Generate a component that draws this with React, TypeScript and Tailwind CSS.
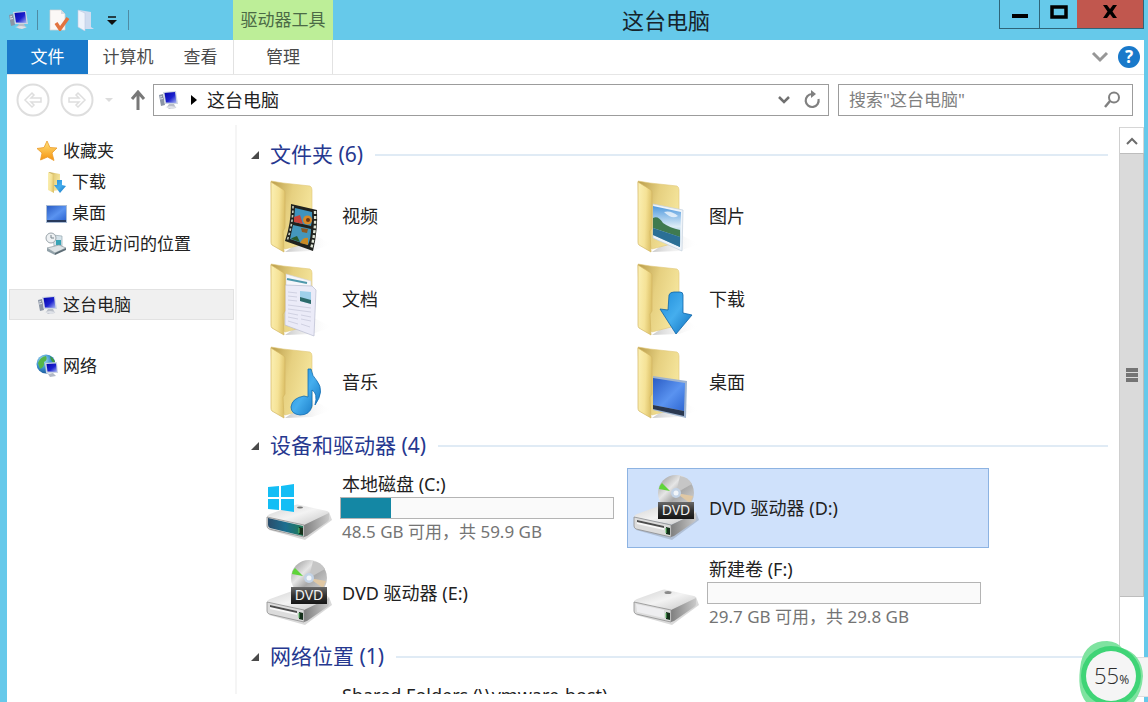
import React from 'react';

type FolderKind = 'video' | 'picture' | 'document' | 'download' | 'music' | 'desktop';
type DriveKind = 'system' | 'dvd' | 'plain';

interface Drive {
    name: string;
    kind: DriveKind;
    used?: number;
    info?: string;
    selected?: boolean;
}

const folders: { name: string; kind: FolderKind }[] = [
    { name: '视频', kind: 'video' },
    { name: '图片', kind: 'picture' },
    { name: '文档', kind: 'document' },
    { name: '下载', kind: 'download' },
    { name: '音乐', kind: 'music' },
    { name: '桌面', kind: 'desktop' },
];

const drives: Drive[] = [
    { name: '本地磁盘 (C:)', kind: 'system', used: 18.5, info: '48.5 GB 可用，共 59.9 GB' },
    { name: 'DVD 驱动器 (D:)', kind: 'dvd', selected: true },
    { name: 'DVD 驱动器 (E:)', kind: 'dvd' },
    { name: '新建卷 (F:)', kind: 'plain', used: 0, info: '29.7 GB 可用，共 29.8 GB' },
];

/* Gradients shared by all the icons */
const IconDefs = () => (
    <svg className="absolute" width="0" height="0" aria-hidden="true">
        <defs>
            <linearGradient id="flap" x1="0" y1="0" x2="1" y2="0.2">
                <stop offset="0" stopColor="#fbf0b4" />
                <stop offset="0.6" stopColor="#f5e296" />
                <stop offset="1" stopColor="#dfc46c" />
            </linearGradient>
            <linearGradient id="back" x1="0" y1="0" x2="1" y2="0.4">
                <stop offset="0" stopColor="#b99c4a" />
                <stop offset="0.5" stopColor="#e6d080" />
                <stop offset="1" stopColor="#f5e59c" />
            </linearGradient>
            <linearGradient id="shade" x1="0" y1="0" x2="1" y2="0">
                <stop offset="0" stopColor="#a5a5a5" />
                <stop offset="1" stopColor="#ffffff" stopOpacity="0" />
            </linearGradient>
            <linearGradient id="blue" x1="0" y1="0" x2="1" y2="1">
                <stop offset="0" stopColor="#1e8cd8" />
                <stop offset="0.5" stopColor="#45aeee" />
                <stop offset="1" stopColor="#0d6dbb" />
            </linearGradient>
            <linearGradient id="screen" x1="0" y1="0" x2="1" y2="1">
                <stop offset="0" stopColor="#2a5cc4" />
                <stop offset="0.55" stopColor="#5a93f0" />
                <stop offset="1" stopColor="#2e66d2" />
            </linearGradient>
            <linearGradient id="monitor" x1="0" y1="0" x2="1" y2="1">
                <stop offset="0" stopColor="#0404a8" />
                <stop offset="0.55" stopColor="#1c22d0" />
                <stop offset="1" stopColor="#aab8f2" />
            </linearGradient>
            <linearGradient id="sky" x1="0" y1="0" x2="0" y2="1">
                <stop offset="0" stopColor="#4e98dd" />
                <stop offset="0.5" stopColor="#dcecf7" />
                <stop offset="1" stopColor="#4089b0" />
            </linearGradient>
            <linearGradient id="lid" x1="0" y1="0" x2="1" y2="1">
                <stop offset="0" stopColor="#d2d2d2" />
                <stop offset="0.5" stopColor="#f3f3f3" />
                <stop offset="1" stopColor="#c6c6c6" />
            </linearGradient>
            <linearGradient id="side" x1="0" y1="0" x2="1" y2="0">
                <stop offset="0" stopColor="#7f7f7f" />
                <stop offset="1" stopColor="#c9c9c9" />
            </linearGradient>
            <linearGradient id="teal" x1="0" y1="0" x2="1" y2="0">
                <stop offset="0" stopColor="#2a4d6b" />
                <stop offset="0.5" stopColor="#1c6e90" />
                <stop offset="1" stopColor="#1f7a55" />
            </linearGradient>
            <linearGradient id="disc" x1="0" y1="0" x2="1" y2="1">
                <stop offset="0" stopColor="#8e8e8e" />
                <stop offset="0.35" stopColor="#e6e6e6" />
                <stop offset="0.55" stopColor="#a9a9a9" />
                <stop offset="1" stopColor="#dedede" />
            </linearGradient>
            <linearGradient id="plate" x1="0" y1="0" x2="0" y2="1">
                <stop offset="0" stopColor="#6a6a6a" />
                <stop offset="0.5" stopColor="#333333" />
                <stop offset="1" stopColor="#161616" />
            </linearGradient>
            <linearGradient id="star" x1="0" y1="0" x2="0" y2="1">
                <stop offset="0" stopColor="#ffe27a" />
                <stop offset="1" stopColor="#f6930f" />
            </linearGradient>
            <radialGradient id="globe" cx="0.35" cy="0.3" r="0.8">
                <stop offset="0" stopColor="#b8e6f6" />
                <stop offset="0.5" stopColor="#3a92cf" />
                <stop offset="1" stopColor="#13498c" />
            </radialGradient>
        </defs>
    </svg>
);

const FolderContent = ({ kind }: { kind: FolderKind }) => {
    switch (kind) {
        case 'video':
            return (
                <g>
                    <path d="M31 28 L57 34 Q58 54 53 75 L25 65 Q31 48 31 28Z" fill="#20221e" />
                    <path d="M35 32 L52 36 Q53 43 51 50 L34 46Z" fill="#3f93bd" />
                    <path d="M33 49 L51 53 Q51 62 48 69 L30 63Z" fill="#4497bd" />
                    <path d="M34 41 L40 39 L43 48 L34 46Z" fill="#c9423a" />
                    <circle cx="47.500" cy="44" r="4.500" fill="#d98826" />
                    <circle cx="48" cy="44" r="2" fill="#6b3713" />
                    <path d="M41 52 l7 1 l-1 4 l-5 -1z" fill="#8c5a24" />
                    <path d="M40 67 q3 -6 8 -5 l0 7z" fill="#c98a25" />
                    <path d="M32 62 l5 -2 l3 6 l-9 -3z" fill="#2b5c2d" />
                    <path d="M33 30 Q33 48 27 65" fill="none" stroke="#c8cfc0" strokeWidth="1.600" strokeDasharray="2.500 2" />
                    <path d="M55 35 Q56 55 51 73" fill="none" stroke="#e0e6d8" strokeWidth="2.400" strokeDasharray="3 1.800" />
                </g>
            );
        case 'picture':
            return (
                <g>
                    <path d="M26 28 L56 34 L55 75 L26 62Z" fill="#eef4fa" stroke="#c3d0dc" strokeWidth="0.700" />
                    <path d="M26 30 L54 36 L53 71 L26 59Z" fill="url(#sky)" />
                    <path d="M26 42 Q31 39 36 47 Q43 52 53 54 L53 61 L26 52Z" fill="#3f7a4f" />
                    <path d="M26 52 L53 61 L53 71 L26 59Z" fill="#2b6f95" />
                    <path d="M37 36 q7 -2 14 4 q-6 4 -14 -4z" fill="#ffffff" opacity="0.7" />
                </g>
            );
        case 'document':
            return (
                <g>
                    <path d="M26 15 L51 22 L51 60 L26 56Z" fill="#f6f6fb" stroke="#cfd1dc" strokeWidth="0.600" />
                    <path d="M27 20 L47 24" stroke="#4e98ac" strokeWidth="2" />
                    <path d="M25 26 L52 27 L56 31 L54 77 L25 66Z" fill="#ebebf8" stroke="#b9bbd0" strokeWidth="0.700" />
                    <path d="M40 32 L51 33 L51 45 L40 42Z" fill="#9fd0ea" />
                    <path d="M40 38 L51 41 L51 45 L40 42Z" fill="#2c6a6a" />
                    <path d="M28 33 l9 1 M28 37 l9 1 M28 41 l9 1 M28 46 l23 3 M28 50 l23 3 M28 54 l10 2 M41 56 l10 2 M28 58 l10 2 M41 60 l10 2 M28 62 l10 3 M41 65 l9 3" stroke="#d0d1e2" strokeWidth="1" />
                </g>
            );
        case 'download':
            return (
                <path
                    d="M42 36 Q43 33 47 33 L53 33 Q56 33 56 36 L56 54 L65 56 L49 75 L33 50 L41 51Z"
                    fill="url(#blue)"
                    stroke="#0c64a8"
                    strokeWidth="0.800"
                />
            );
        case 'music':
            return (
                <path
                    d="M48 27 L51 27 Q52 34 57 39 Q65 49 55 63 Q58 51 52 48 L52 64 Q50 73 40 73 Q31 72 31 65 Q32 56 44 54 L48 55Z"
                    fill="url(#blue)"
                    stroke="#0f6cb2"
                    strokeWidth="0.800"
                />
            );
        case 'desktop':
            return (
                <g>
                    <path d="M26 34 L60 39 L59 76 L26 68Z" fill="#9fb4cf" />
                    <path d="M26 36 L58 41 L57 69 L26 63Z" fill="url(#screen)" />
                    <path d="M26 63 L57 69 L57 74 L26 67Z" fill="#2a3850" />
                </g>
            );
    }
};

const FolderIcon = ({ kind }: { kind: FolderKind }) => (
    <svg className="h-[80px] w-[72px] shrink-0" viewBox="0 0 72 80" aria-hidden="true">
        <path d="M25 76 L52 58 L72 68 L52 75Z" fill="url(#shade)" opacity="0.6" />
        <path d="M11 5 L23 7 L50 10 Q52 11 52 14 L52 66 L25 73 L13 60Z" fill="url(#back)" stroke="#e0c878" strokeWidth="0.600" />
        <FolderContent kind={kind} />
        <path d="M11 6 L24 14 Q25 15 25 17 L25 52 L23 55 L24 76 L12 69 Q11 68 11 66Z" fill="url(#flap)" stroke="#d3b661" strokeWidth="0.700" />
    </svg>
);

const DriveIcon = ({ kind }: { kind: DriveKind }) => (
    <svg className="h-[80px] w-[72px] shrink-0" viewBox="0 0 72 80" aria-hidden="true">
        <path d="M8 62 L44 72 L71 52 L68 44Z" fill="#000000" opacity="0.15" />
        <path d="M6 49 Q6 47 9 46 L34 37 Q36 36 39 37 L66 43 Q69 44 67 46 L45 56 Q43 57 41 56Z" fill="url(#lid)" />
        <path d="M43 57 L68 45 L68 51 Q68 53 66 54 L46 68 L43 69Z" fill="url(#side)" />
        <path d="M6 49 L43 57 L43 69 L8 61 Q6 60 6 58Z" fill="#dcdcdc" stroke="#8d8d8d" strokeWidth="0.800" />
        {kind === 'system' && (
            <>
                <path d="M7 50 L42 58 L42 68 L9 60 Q7 59 7 57Z" fill="url(#teal)" />
                <path d="M7 19 L18 18 L18 29 L7 29Z M20 18 L33 16 L33 29 L20 29Z M7 31 L18 31 L18 42 L7 41Z M20 31 L33 31 L33 44 L20 42Z" fill="#14bef5" />
                <ellipse cx="39" cy="39.500" rx="3" ry="1" fill="#777777" />
            </>
        )}
        {kind === 'plain' && (
            <>
                <path d="M8 51 L36 57 L36 65 L9 59Z" fill="#f2f2f5" opacity="0.8" />
                <ellipse cx="40" cy="39.500" rx="3.500" ry="1.500" fill="#8a8a8a" />
            </>
        )}
        {kind === 'dvd' && (
            <>
                <path d="M9 52 L36 58 L36 62 L9 56Z" fill="#f8f8f8" />
                <path d="M9 52 L36 58 L36 60 L9 54Z" fill="#4d4d4d" />
                <circle cx="48" cy="25" r="18" fill="url(#disc)" />
                <path d="M42 23 L31 21 Q31 18 34 15Z" fill="#5fd43a" />
                <path d="M48 25 L52 8 Q60 9 64 16Z" fill="#c6c6c6" />
                <path d="M48 25 L65 28 L62 35Z" fill="#e0c8a4" />
                <circle cx="48" cy="25" r="5" fill="#c3d3e6" />
                <circle cx="48" cy="25" r="2.500" fill="#f2f6fa" />
                <rect x="30" y="34" width="36" height="17" fill="url(#plate)" />
                <text x="48" y="47" textAnchor="middle" fontSize="14" fill="#f2f2f2">DVD</text>
            </>
        )}
        <path d="M38 59 L42 60 L42 67 L38 66Z" fill="#15301b" />
        <path d="M38 60 L38 65" stroke="#63c46b" strokeWidth="1" />
    </svg>
);

const ComputerIcon = () => (
    <svg className="size-6 shrink-0" viewBox="0 0 24 24" aria-hidden="true">
        <path d="M2 7 L6 6 L8 17 L4 18Z" fill="#8b95a5" />
        <path d="M3 9 l2 -0.500 M3 11 l3 -0.500" stroke="#d9dfe8" strokeWidth="1" />
        <path d="M6 4 L19 3 L21 16 L8 16Z" fill="#cdd5e2" />
        <path d="M7.500 5 L18 4 L19.500 15 L9 14.500Z" fill="url(#monitor)" />
        <path d="M12 16 L17 16 L19 20 L12 21 L10 19Z" fill="#b9bec8" />
        <path d="M8 19 L15 21 L20 19 L14 18Z" fill="#dfe2e8" />
    </svg>
);

const NetworkIcon = () => (
    <svg className="size-6 shrink-0" viewBox="0 0 24 24" aria-hidden="true">
        <circle cx="10" cy="10" r="9.500" fill="url(#globe)" />
        <path d="M2 9 Q4 3 10 2 Q12 6 8 8 Q9 13 4 15Z" fill="#55b548" />
        <path d="M14 2 Q19 5 19 10 Q15 8 14 2Z" fill="#3f9c3c" />
        <path d="M9 9 L21 8 L22 19 L10 19Z" fill="#cbd4e3" />
        <path d="M10.500 10 L20 9.500 L21 18 L11.500 17.500Z" fill="url(#monitor)" />
        <path d="M12 20 L17 19 L20 22 L14 23Z" fill="#b3bac6" />
    </svg>
);

const StarIcon = () => (
    <svg className="size-6 shrink-0" viewBox="0 0 24 24" aria-hidden="true">
        <path d="M11 2 L14 8.500 L21 9 L16 14 L18 21.500 L11.500 18 L4.500 21 L6 14 L1 9.500 L8 8.500Z" fill="url(#star)" stroke="#ea9b2b" strokeWidth="0.800" strokeLinejoin="round" />
    </svg>
);

const DownloadsIcon = () => (
    <svg className="size-6 shrink-0" viewBox="0 0 24 24" aria-hidden="true">
        <path d="M4 2 L15 4 L15 20 L7 21Z" fill="url(#back)" />
        <path d="M12 10 L17 10 L17 15 L21 16 L15 23 L9 15 L12 15Z" fill="url(#blue)" />
        <path d="M3 2 L9 5 L9 23 L3 20Z" fill="url(#flap)" />
    </svg>
);

const DesktopIcon = () => (
    <svg className="size-6 shrink-0" viewBox="0 0 24 24" aria-hidden="true">
        <rect x="1" y="4" width="21" height="18" fill="#a9bcd6" />
        <rect x="2" y="5" width="19" height="14" fill="url(#screen)" />
        <rect x="2" y="19" width="19" height="2" fill="#283a5c" />
    </svg>
);

const RecentIcon = () => (
    <svg className="size-6 shrink-0" viewBox="0 0 24 24" aria-hidden="true">
        <path d="M8 3 L17 4 L17 14 L9 14Z" fill="#d5e3ea" stroke="#97a7b0" strokeWidth="0.700" />
        <path d="M11 8 L16 8 L16 13 L11 13Z" fill="#36a3b5" />
        <circle cx="6" cy="6" r="5" fill="#eef1f3" stroke="#9ba5ab" strokeWidth="1" />
        <path d="M6 3 V6 H9" fill="none" stroke="#77838a" strokeWidth="1" />
        <path d="M2 16 L14 13 L21 16 L10 21Z" fill="#dde3e6" stroke="#8d999f" strokeWidth="0.700" />
        <path d="M2 16 L10 21 L10 23 L2 19Z" fill="#90a0a8" />
        <path d="M10 21 L21 16 L21 18 L10 23Z" fill="#5c6c75" />
    </svg>
);

interface NavItemProps {
    icon: React.ReactNode;
    label: string;
    child?: boolean;
    selected?: boolean;
}

const NavItem: React.FC<NavItemProps> = ({ icon, label, child, selected }) => (
    <a
        href="#"
        className={`flex h-[31px] items-center gap-[3px] border ${child ? 'pl-[35px]' : 'pl-[26px]'} ${
            selected ? 'border-[#e2e2e2] bg-[#f0f0f0]' : 'border-transparent'
        }`}
    >
        {icon}
        <span>{label}</span>
    </a>
);

const GroupHeader = ({ title, count }: { title: string; count: number }) => (
    <h2 className="flex h-8 items-center text-[21px] text-[#26388f]">
        <svg className="mr-[10px] ml-[13px] size-[10px]" viewBox="0 0 10 10" aria-hidden="true">
            <path d="M9 1 L9 9 L1 9Z" fill="#4a4a4a" />
        </svg>
        <span>
            {title} ({count})
        </span>
        <span className="ml-3 h-[2px] flex-1 bg-[#e0ebf5]" />
    </h2>
);

const DriveTile = ({ drive }: { drive: Drive }) => (
    <a
        href="#"
        className={`flex h-[80px] items-center border ${
            drive.selected ? 'border-[#8db3e2] bg-[#cfe1fb]' : 'border-transparent'
        }`}
    >
        <DriveIcon kind={drive.kind} />
        {drive.info ? (
            <div className="ml-[7px] flex-1 pr-[7px]">
                <div className="pl-[2px] text-lg leading-[26px]">{drive.name}</div>
                <div
                    role="meter"
                    aria-label={drive.name}
                    aria-valuenow={drive.used}
                    className="h-[22px] border border-[#b4b4b4] bg-[#fafafa]"
                >
                    <div className="h-full bg-[#1487a4]" style={{ width: `${drive.used}%` }} />
                </div>
                <div className="pl-[2px] leading-[26px] text-[#747474]">{drive.info}</div>
            </div>
        ) : (
            <span className="ml-[9px] text-lg">{drive.name}</span>
        )}
    </a>
);

const TitleBar = () => (
    <header className="flex h-10 shrink-0">
        <div className="flex w-[226px] shrink-0 items-center">
            <ComputerIcon />
            <span className="ml-[6px] h-5 w-px bg-[#4f8ba3]" />
            <button className="ml-[10px]" aria-label="属性">
                <svg className="size-[22px]" viewBox="0 0 22 22">
                    <path d="M2 1 L13 1 L17 5 L17 21 L2 21Z" fill="#fbf8f6" stroke="#d9d3d0" strokeWidth="0.700" />
                    <path d="M13 1 L13 5 L17 5Z" fill="#d6dbe2" />
                    <path d="M8 14 L12 20 L20 9" fill="none" stroke="#e27440" strokeWidth="3.500" />
                </svg>
            </button>
            <button className="ml-[6px]" aria-label="新建文件夹">
                <svg className="size-[22px]" viewBox="0 0 22 22">
                    <path d="M3 1 L15 3 L15 18 L18 20 L9 20Z" fill="#cfdcf0" />
                    <path d="M2 1 L9 4 L9 22 L2 18Z" fill="#eef3fb" stroke="#bdcbe2" strokeWidth="0.600" />
                </svg>
            </button>
            <button className="ml-2" aria-label="自定义快速访问工具栏">
                <svg className="size-3" viewBox="0 0 12 12">
                    <path d="M2 3 H10" stroke="#111111" strokeWidth="1.500" />
                    <path d="M1 6 H11 L6 11Z" fill="#111111" />
                </svg>
            </button>
            <span className="ml-[10px] h-5 w-px bg-[#4f8ba3]" />
        </div>
        <div className="flex w-[100px] shrink-0 items-center justify-center bg-[#bdee98] text-[#4b6a46]">驱动器工具</div>
        <h1 className="flex-1 self-center text-center text-[22px] leading-8 text-[#16242b]">这台电脑</h1>
        <div className="flex h-[29px] border-b border-l border-[#2f6478]">
            <button className="flex w-10 items-center justify-center border-r border-[#2f6478]" aria-label="最小化">
                <svg className="size-5" viewBox="0 0 20 20"><path d="M2 10 H18 V14 H2Z" fill="#000000" /></svg>
            </button>
            <button className="flex w-[37px] items-center justify-center" aria-label="最大化">
                <svg className="size-5" viewBox="0 0 20 20"><path d="M3 3 H17 V13 H3Z" fill="none" stroke="#000000" strokeWidth="3.500" /></svg>
            </button>
            <button className="flex w-[67px] items-center justify-center border-r border-[#2f6478] bg-[#c1574e]" aria-label="关闭">
                <svg className="size-5" viewBox="0 0 20 20">
                    <path d="M3 1 H7 L10 5 L13 1 H17 L12.500 7.500 L17 14 H13 L10 10 L7 14 H3 L7.500 7.500Z" fill="#000000" />
                </svg>
            </button>
        </div>
    </header>
);

const Ribbon = () => (
    <nav className="flex h-[35px] shrink-0 border-b border-[#e6e6e6] text-[#4a4a4a]">
        <button className="w-[81px] bg-[#1979ca] text-white">文件</button>
        <button className="w-[80px]">计算机</button>
        <button className="w-[65px]">查看</button>
        <button className="w-[100px] border-x border-[#e2e2e2]">管理</button>
        <div className="ml-auto flex items-center gap-[8px] pr-1">
            <button aria-label="展开功能区">
                <svg className="size-5" viewBox="0 0 20 20"><path d="M3 6 L10 13 L17 6" fill="none" stroke="#979797" strokeWidth="3" /></svg>
            </button>
            <button className="flex size-[22px] items-center justify-center rounded-full bg-[#1979ca] font-bold text-white" aria-label="帮助">
                ?
            </button>
        </div>
    </nav>
);

const AddressRow = () => (
    <div className="flex h-[50px] shrink-0 items-center pr-[11px] pl-[9px]">
        <button aria-label="后退">
            <svg className="size-[34px]" viewBox="0 0 34 34" fill="none" stroke="#dedede">
                <circle cx="17" cy="17" r="15.500" strokeWidth="2" />
                <path d="M9 17 L16 10 L18 12 L15 15 H25 V19 H15 L18 22 L16 24Z" strokeWidth="1.500" />
            </svg>
        </button>
        <button className="ml-[10px]" aria-label="前进">
            <svg className="size-[34px]" viewBox="0 0 34 34" fill="none" stroke="#dedede">
                <circle cx="17" cy="17" r="15.500" strokeWidth="2" />
                <path d="M25 17 L18 10 L16 12 L19 15 H9 V19 H19 L16 22 L18 24Z" strokeWidth="1.500" />
            </svg>
        </button>
        <button className="ml-[10px]" aria-label="最近浏览的位置">
            <svg className="size-[10px]" viewBox="0 0 10 10"><path d="M1 3 H9 L5 7Z" fill="#dcdcdc" /></svg>
        </button>
        <button className="ml-[14px]" aria-label="上移">
            <svg className="size-5" viewBox="0 0 20 20" fill="none" stroke="#787878" strokeWidth="3">
                <path d="M10 20 V3 M4 9 L10 2 L16 9" />
            </svg>
        </button>
        <div className="ml-[5px] flex h-8 flex-1 items-center border border-[#9c9c9c] pl-[3px]">
            <ComputerIcon />
            <svg className="ml-2 size-3" viewBox="0 0 12 12"><path d="M2 1 L8 6 L2 11Z" fill="#000000" /></svg>
            <button className="ml-[6px] text-lg">这台电脑</button>
            <button className="ml-auto" aria-label="历史记录">
                <svg className="size-4" viewBox="0 0 16 16"><path d="M3 5 L8 10 L13 5" fill="none" stroke="#707070" strokeWidth="2.500" /></svg>
            </button>
            <button className="mr-[6px] ml-[10px]" aria-label="刷新">
                <svg className="size-5" viewBox="0 0 20 20">
                    <path d="M16.500 9 A6.500 6.500 0 1 1 10 4" fill="none" stroke="#808080" strokeWidth="2.200" />
                    <path d="M9 0 L14 4 L9 8Z" fill="#808080" />
                </svg>
            </button>
        </div>
        <label className="ml-[9px] flex h-8 w-[295px] items-center border border-[#9c9c9c] px-[10px]">
            <input className="min-w-0 flex-1 outline-none placeholder:text-[#808080]" type="text" aria-label="搜索" placeholder={'搜索"这台电脑"'} />
            <svg className="size-5" viewBox="0 0 20 20" fill="none" stroke="#808080">
                <circle cx="12" cy="7.500" r="5" strokeWidth="2" />
                <path d="M8 11 L3 17" strokeWidth="2.500" />
            </svg>
        </label>
    </div>
);

const Scrollbar = () => (
    <div className="mt-[2px] flex w-[25px] shrink-0 flex-col border-l border-[#cfcfcf]">
        <button className="flex h-[26px] shrink-0 items-center justify-center border-t border-r border-[#d6d6d6]" aria-label="向上滚动">
            <svg className="size-4" viewBox="0 0 16 16"><path d="M3 11 L8 6 L13 11" fill="none" stroke="#6c6c6c" strokeWidth="2" /></svg>
        </button>
        <div className="flex-1">
            <div className="flex h-[82%] flex-col items-center justify-center gap-px border border-l-0 border-[#bdbdbd] bg-[#dadada]">
                <span className="h-1 w-3 bg-[#747474]" />
                <span className="h-1 w-3 bg-[#747474]" />
                <span className="h-1 w-3 bg-[#747474]" />
            </div>
        </div>
    </div>
);

const UsageBall = () => (
    <div className="absolute right-0 bottom-0 h-[62px] w-[72px]">
        <div className="absolute top-[17px] right-0 h-10 w-9 border-y border-[#dedede] bg-[#f4f4f4]" />
        <svg className="absolute inset-0 h-full w-full" viewBox="0 0 72 62" aria-hidden="true">
            <path d="M5 22 Q10 1 31 1 Q42 2 46 8 Q66 14 67 36 Q66 52 58 62 L10 62 Q0 50 5 22Z" fill="#7fe3a0" />
            <circle cx="35" cy="36" r="30" fill="#3fd476" />
            <circle cx="35" cy="36" r="25" fill="#f5f5f5" />
        </svg>
        <span className="absolute top-[21px] left-[18px] font-['Open_Sans'] text-[22px] leading-7 font-light text-[#2c2c2c]">
            55<span className="text-[12px] font-normal">%</span>
        </span>
    </div>
);

const App: React.FC = () => {
    return (
        <div className="relative flex h-screen flex-col overflow-hidden bg-[#66c9ea] pr-1 pl-[7px] font-['Noto_Sans','Noto_Sans_CJK_SC',sans-serif] text-[17px] text-[#222222]">
            <IconDefs />
            <TitleBar />
            <div className="flex min-h-0 flex-1 flex-col bg-white pb-2">
                <Ribbon />
                <AddressRow />
                <div className="flex min-h-0 flex-1">
                    {/* Navigation pane */}
                    <aside className="w-[230px] shrink-0 border-r-2 border-[#f5f5f5] pt-[10px] pr-[1px] pl-[2px]">
                        <NavItem icon={<StarIcon />} label="收藏夹" />
                        <NavItem icon={<DownloadsIcon />} label="下载" child />
                        <NavItem icon={<DesktopIcon />} label="桌面" child />
                        <NavItem icon={<RecentIcon />} label="最近访问的位置" child />
                        <div className="mt-[30px]">
                            <NavItem icon={<ComputerIcon />} label="这台电脑" selected />
                        </div>
                        <div className="mt-[30px]">
                            <NavItem icon={<NetworkIcon />} label="网络" />
                        </div>
                    </aside>

                    {/* File list */}
                    <main className="min-w-0 flex-1 overflow-hidden pt-[14px] pr-[11px]">
                        <section>
                            <GroupHeader title="文件夹" count={6} />
                            <div className="mt-[5px] grid grid-cols-[repeat(auto-fill,362px)] gap-x-[5px] gap-y-[3px] pl-[23px]">
                                {folders.map((f) => (
                                    <a key={f.kind} href="#" className="flex h-[80px] items-center">
                                        <FolderIcon kind={f.kind} />
                                        <span className="ml-[10px] text-lg">{f.name}</span>
                                    </a>
                                ))}
                            </div>
                        </section>
                        <section className="mt-2">
                            <GroupHeader title="设备和驱动器" count={4} />
                            <div className="mt-[6px] grid grid-cols-[repeat(auto-fill,362px)] gap-[5px] pl-[23px]">
                                {drives.map((d) => (
                                    <DriveTile key={d.name} drive={d} />
                                ))}
                            </div>
                        </section>
                        <section className="mt-2">
                            <GroupHeader title="网络位置" count={1} />
                            <a href="#" className="mt-[5px] block pl-[105px] text-lg leading-[34px]">
                                Shared Folders (\\vmware-host)
                            </a>
                        </section>
                    </main>
                    <Scrollbar />
                </div>
            </div>
            <UsageBall />
        </div>
    );
};

export default App;
